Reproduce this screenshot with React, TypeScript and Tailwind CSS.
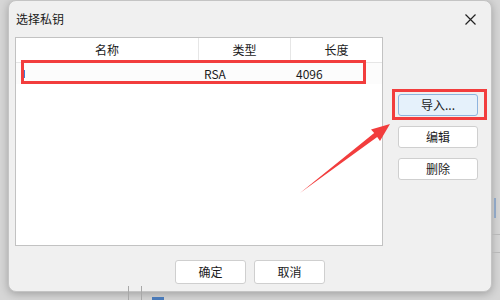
import React from 'react';

const font = { fontFamily: "'Noto Sans CJK SC', 'Liberation Sans', sans-serif" };

const SideButton: React.FC<{ label: string; active?: boolean }> = ({ label, active }) => (
  <button
    className={
      'w-[80px] h-[22px] rounded-[3px] border text-[12px] text-[#1a1a1a] flex items-center justify-center ' +
      (active ? 'bg-[#e5f1fb] border-[#8eb4de]' : 'bg-white border-[#cfcfcf]')
    }
  >
    {label}
  </button>
);

const App: React.FC = () => {
  return (
    <div className="relative w-[500px] h-[300px] overflow-hidden bg-[#d6d6d6]" style={font}>
      {/* desktop behind the dialog */}
      <div className="absolute left-[128px] top-[286px] w-px h-[14px] bg-[#a8a8a8]" />
      <div className="absolute left-[141px] top-[286px] w-px h-[14px] bg-[#a8a8a8]" />
      <div className="absolute left-[152px] top-[297px] w-[12px] h-[3px] bg-[#4a7ab8]" />
      <div className="absolute left-[494px] top-[198px] w-[2px] h-[20px] bg-[#8fa6c4]" />
      <div className="absolute left-[492px] top-[234px] w-[8px] h-px bg-[#b8b8b8]" />
      <div className="absolute left-[492px] top-[252px] w-[8px] h-px bg-[#b8b8b8]" />

      <div className="ml-[8px] w-[484px] h-[292px] rounded-[8px] bg-[#f0f0f0] border border-[#c4c4c4] shadow-[0_2px_8px_rgba(0,0,0,0.25)] flex flex-col">
        <div className="h-[36px] flex items-center justify-between pl-[7px] pr-[15px]">
          <span className="text-[12px] text-[#1a1a1a]">选择私钥</span>
          <svg width="11" height="11" viewBox="0 0 11 11">
            <path d="M0.5 0.5 L10.5 10.5 M10.5 0.5 L0.5 10.5" stroke="#222" strokeWidth="1.2" />
          </svg>
        </div>

        <div className="flex pl-[6px]">
          <div className="w-[368px] h-[209px] bg-white border border-[#c2c2c2] flex flex-col">
            <div className="flex h-[25px] border-b border-[#e6e6e6] text-[12px] text-[#1a1a1a]">
              <div className="w-[183px] flex items-center justify-center border-r border-[#e6e6e6]">名称</div>
              <div className="w-[92px] flex items-center justify-center border-r border-[#e6e6e6]">类型</div>
              <div className="flex-1 flex items-center justify-center">长度</div>
            </div>
            <div className="flex h-[21px] items-center text-[12px] text-[#1a1a1a] bg-[#fcfcfc]">
              <div className="w-[183px] pl-[8px] flex items-center">
                <div className="w-px h-[8px] bg-[#3b7dd8]" />
              </div>
              <div className="w-[92px] pl-[5px]">RSA</div>
              <div className="flex-1 pl-[5px]">4096</div>
            </div>
          </div>

          <div className="ml-[15px] mt-[57px] flex flex-col gap-[10px]">
            <SideButton label="导入..." active />
            <SideButton label="编辑" />
            <SideButton label="删除" />
          </div>
        </div>

        <div className="mt-[14px] flex justify-center gap-[8px]">
          <button className="w-[71px] h-[24px] rounded-[3px] bg-white border border-[#cfcfcf] text-[12px] text-[#1a1a1a]">确定</button>
          <button className="w-[71px] h-[24px] rounded-[3px] bg-white border border-[#cfcfcf] text-[12px] text-[#1a1a1a]">取消</button>
        </div>
      </div>

      {/* annotations */}
      <div className="absolute left-[21px] top-[60px] w-[345px] h-[24px] border-[3px] border-[#f23d3d]" />
      <div className="absolute left-[392px] top-[89px] w-[95px] h-[31px] border-[3px] border-[#f23d3d]" />
      <svg className="absolute left-0 top-0" width="500" height="300">
        <polygon
          points="300,193 377.2,137 380,141 390,124 371,129.4 374.2,133"
          fill="#f23d3d"
        />
      </svg>
    </div>
  );
};

export default App;
